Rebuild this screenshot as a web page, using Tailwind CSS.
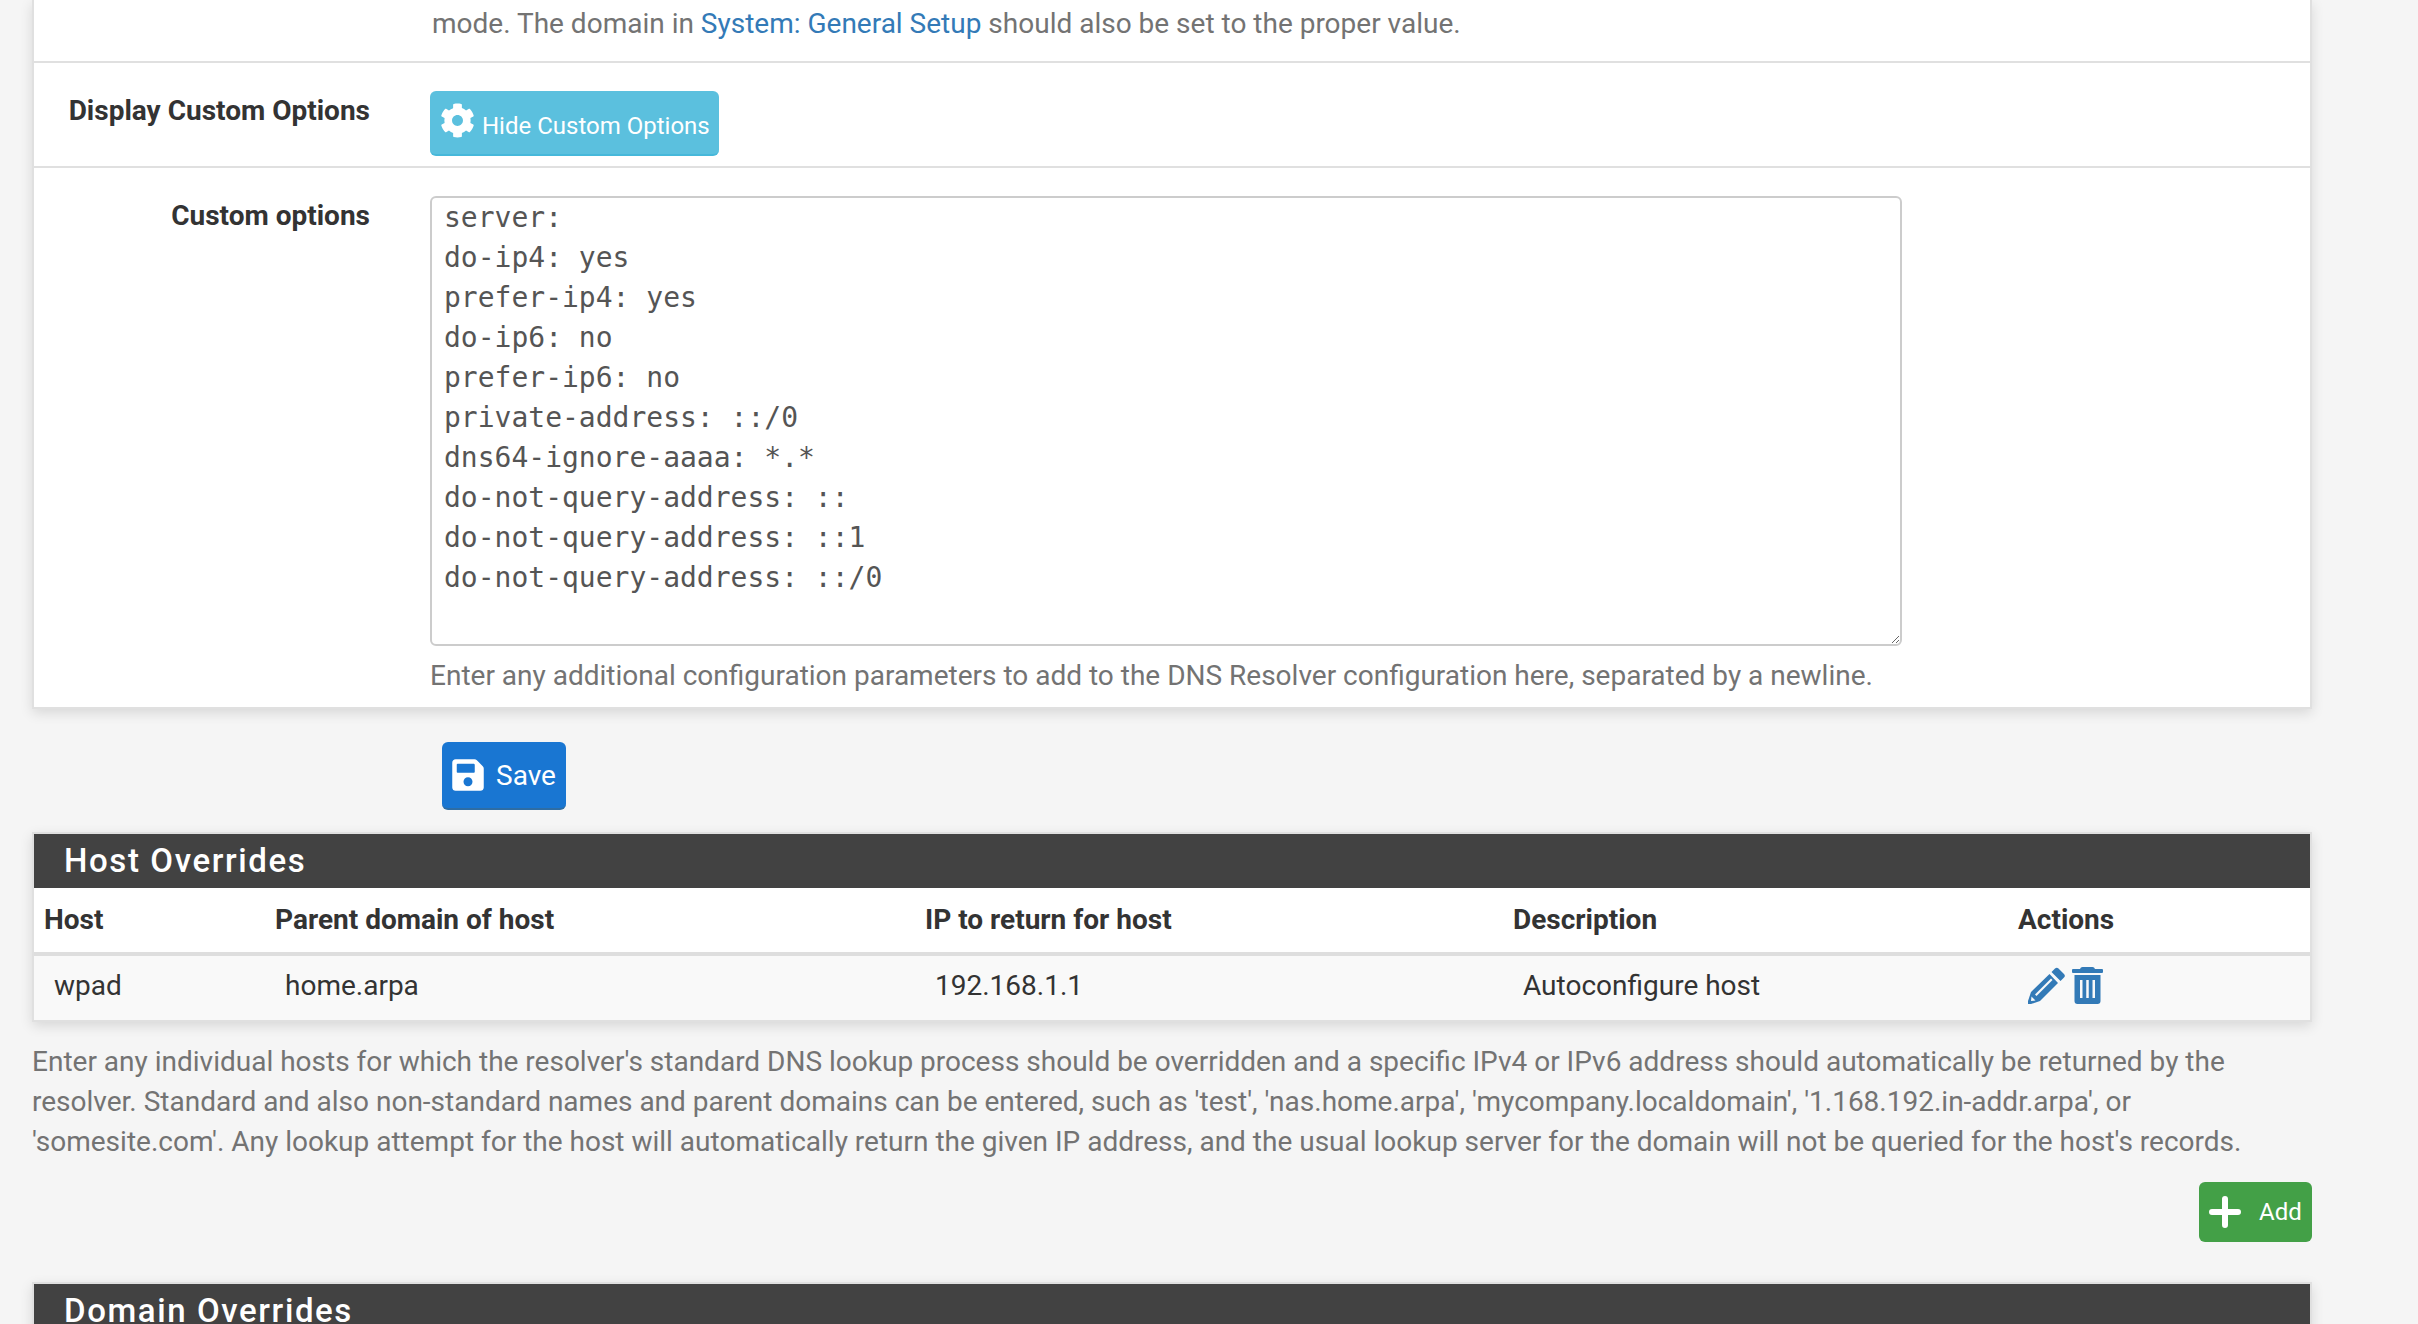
<!DOCTYPE html>
<html>
<head>
<meta charset="utf-8">
<title>DNS Resolver</title>
<script src="https://cdn.jsdelivr.net/npm/@tailwindcss/browser@4"></script>
</head>
<body class="bg-[#f5f5f5] font-['Roboto',sans-serif] text-[28px] leading-[40px] text-[#212121]">
<div class="h-[1324px] w-[2418px] overflow-hidden pl-[32px]">
    <div class="w-[2280px]">

        <!-- general options -->
        <div class="bg-white border-x-2 border-b-2 border-[#e0e0e0] shadow-[0_4px_12px_rgba(0,0,0,0.12)] h-[709px]">
            <div class="h-[63px] border-b-2 border-[#e0e0e0] pl-[398px] pt-[4px] text-[#737373]">
                mode. The domain in <a href="#" class="text-[#337ab7]">System: General Setup</a> should also be set to the proper value.
            </div>
            <div class="h-[105px] border-b-2 border-[#e0e0e0] flex">
                <div class="w-[336px] text-right font-bold text-[#333333] pt-[28px]">Display Custom Options</div>
                <div class="pl-[60px] pt-[28px]">
                    <button class="w-[289px] h-[65px] bg-[#5bc0de] border-b-2 border-[#46b8da] rounded-[6px] flex items-start whitespace-nowrap text-white text-[24px] pl-[10px]">
                        <svg class="w-[35px] h-[35px] mt-[12px] shrink-0" viewBox="0 0 512 512" fill="currentColor"><path d="M487.4 315.7l-42.6-24.6c4.3-23.2 4.3-47 0-70.2l42.6-24.6c4.9-2.8 7.1-8.6 5.5-14-11.1-35.6-30-67.8-54.7-94.6-3.8-4.1-10-5.1-14.8-2.3L380.8 110c-17.9-15.4-38.5-27.3-60.8-35.1V25.8c0-5.6-3.9-10.5-9.4-11.7-36.7-8.2-74.3-7.8-109.2 0-5.5 1.2-9.4 6.1-9.4 11.7V75c-22.2 7.9-42.8 19.8-60.8 35.1L88.7 85.5c-4.9-2.8-11-1.9-14.8 2.3-24.7 26.7-43.6 58.9-54.7 94.6-1.7 5.4.6 11.2 5.5 14L67.3 221c-4.3 23.2-4.3 47 0 70.2l-42.6 24.6c-4.9 2.8-7.1 8.6-5.5 14 11.1 35.6 30 67.8 54.7 94.6 3.8 4.1 10 5.1 14.8 2.3l42.6-24.6c17.9 15.4 38.5 27.3 60.8 35.1v49.2c0 5.6 3.9 10.5 9.4 11.7 36.7 8.2 74.3 7.8 109.2 0 5.5-1.2 9.4-6.1 9.4-11.7v-49.2c22.2-7.9 42.8-19.8 60.8-35.1l42.6 24.6c4.9 2.8 11 1.9 14.8-2.3 24.7-26.7 43.6-58.9 54.7-94.6 1.5-5.5-.7-11.3-5.6-14.1zM256 336c-44.1 0-80-35.9-80-80s35.9-80 80-80 80 35.9 80 80-35.9 80-80 80z"/></svg>
                        <span class="ml-[7px] mt-[17px] leading-[36px]">Hide Custom Options</span>
                    </button>
                </div>
            </div>
            <div class="flex">
                <div class="w-[336px] text-right font-bold text-[#333333] pt-[28px]">Custom options</div>
                <div class="pl-[60px] pt-[28px]">
                    <textarea class="block w-[1472px] h-[450px] border-2 border-[#cccccc] rounded-[6px] px-[12px] py-0 bg-white font-['DejaVu_Sans_Mono',monospace] text-[28px] leading-[40px] text-[#555555]" spellcheck="false">server:
do-ip4: yes
prefer-ip4: yes
do-ip6: no
prefer-ip6: no
private-address: ::/0
dns64-ignore-aaaa: *.*
do-not-query-address: ::
do-not-query-address: ::1
do-not-query-address: ::/0</textarea>
                    <div class="text-[#737373] mt-[10px]">Enter any additional configuration parameters to add to the DNS Resolver configuration here, separated by a newline.</div>
                </div>
            </div>
        </div>

        <!-- save -->
        <div class="pl-[410px] pt-[33px]">
            <button class="w-[124px] h-[68px] bg-[#1976d2] border-b-2 border-[#2e6da4] rounded-[6px] flex items-center text-white text-[28px] pl-[10px]">
                <svg class="w-[32px] h-[36px]" viewBox="0 0 448 512" fill="currentColor"><path d="M433.941 129.941l-83.882-83.882A48 48 0 0 0 316.118 32H48C21.49 32 0 53.49 0 80v352c0 26.51 21.49 48 48 48h352c26.51 0 48-21.49 48-48V163.882a48 48 0 0 0-14.059-33.941zM224 416c-35.346 0-64-28.654-64-64 0-35.346 28.654-64 64-64s64 28.654 64 64c0 35.346-28.654 64-64 64zm96-304.52V212c0 6.627-5.373 12-12 12H76c-6.627 0-12-5.373-12-12V108c0-6.627 5.373-12 12-12h228.52c3.183 0 6.235 1.264 8.485 3.515l3.48 3.48A11.996 11.996 0 0 1 320 111.48z"/></svg>
                <span class="ml-[12px] mt-[2px]">Save</span>
            </button>
        </div>

        <!-- host overrides -->
        <div class="mt-[22px] bg-white border-2 border-[#e0e0e0] shadow-[0_4px_12px_rgba(0,0,0,0.12)]">
            <h2 class="h-[54px] bg-[#424242] text-white font-medium text-[33px] tracking-[1.6px] leading-[53px] pl-[30px]">Host Overrides</h2>
            <table class="w-full table-fixed">
                <thead>
                    <tr class="h-[66px] border-b-4 border-[#dedede] bg-white text-left text-[#333333]">
                        <th class="w-[231px] pl-[10px] font-bold">Host</th>
                        <th class="w-[650px] pl-[10px] font-bold">Parent domain of host</th>
                        <th class="w-[588px] pl-[10px] font-bold">IP to return for host</th>
                        <th class="w-[505px] pl-[10px] font-bold">Description</th>
                        <th class="pl-[10px] font-bold">Actions</th>
                    </tr>
                </thead>
                <tbody>
                    <tr class="h-[66px] bg-[#f9f9f9] text-[#333333]">
                        <td class="pl-[20px] pb-[5px]">wpad</td>
                        <td class="pl-[20px] pb-[5px]">home.arpa</td>
                        <td class="pl-[20px] pb-[5px]">192.168.1.1</td>
                        <td class="pl-[20px] pb-[5px]">Autoconfigure host</td>
                        <td class="pl-[20px] pb-[5px]">
                            <div class="flex gap-[7px] text-[#337ab7]">
                                <!-- pencil -->
                                <svg class="w-[37px] h-[37px]" viewBox="0 0 37 37" fill="currentColor"><path fill-rule="evenodd" d="M27 1.500a2.500 2.500 0 0 1 3.500 0l5.500 5.500a2.500 2.500 0 0 1 0 3.500l-3.500 3.500-9-9zM21.500 7l8.500 9-18 18-9 3-3 0 0-3 3-9zM23 11.500 7 27.500l1.500 1.500 16-16zM3.500 29.500l-.5 4.500 4.500-.5z"/></svg>
                                <!-- trash -->
                                <svg class="w-[31px] h-[37px]" viewBox="0 0 31 37" fill="currentColor"><path fill-rule="evenodd" d="M11 0h9a3 3 0 0 1 3 2h7a1 1 0 0 1 1 1v2a1 1 0 0 1-1 1H1a1 1 0 0 1-1-1V3a1 1 0 0 1 1-1h7a3 3 0 0 1 3-2zM2.500 8h26v26a3 3 0 0 1-3 3h-20a3 3 0 0 1-3-3zM8 13v18h2.500V13zM14.250 13v18h2.500V13zM20.500 13v18H23V13z"/></svg>
                            </div>
                        </td>
                    </tr>
                </tbody>
            </table>
        </div>

        <p class="mt-[20px] text-[#737373]">Enter any individual hosts for which the resolver's standard DNS lookup process should be overridden and a specific IPv4 or IPv6 address should automatically be returned by the resolver. Standard and also non-standard names and parent domains can be entered, such as 'test', 'nas.home.arpa', 'mycompany.localdomain', '1.168.192.in-addr.arpa', or 'somesite.com'. Any lookup attempt for the host will automatically return the given IP address, and the usual lookup server for the domain will not be queried for the host's records.</p>

        <div class="flex justify-end mt-[20px]">
            <button class="w-[113px] h-[60px] bg-[#43a047] rounded-[6px] flex items-center text-white text-[24px] pl-[10px]">
                <svg class="w-[32px] h-[32px]" viewBox="0 0 32 32" fill="currentColor"><path d="M13 3a3 3 0 0 1 6 0v10h10a3 3 0 0 1 0 6H19v10a3 3 0 0 1-6 0V19H3a3 3 0 0 1 0-6h10z"/></svg>
                <span class="ml-[18px]">Add</span>
            </button>
        </div>

        <!-- domain overrides -->
        <div class="mt-[40px] border-2 border-[#e0e0e0] shadow-[0_4px_12px_rgba(0,0,0,0.12)]">
            <h2 class="h-[54px] bg-[#424242] text-white font-medium text-[33px] tracking-[1.6px] leading-[53px] pl-[30px]">Domain Overrides</h2>
        </div>
    </div>
</div>
</body>
</html>
